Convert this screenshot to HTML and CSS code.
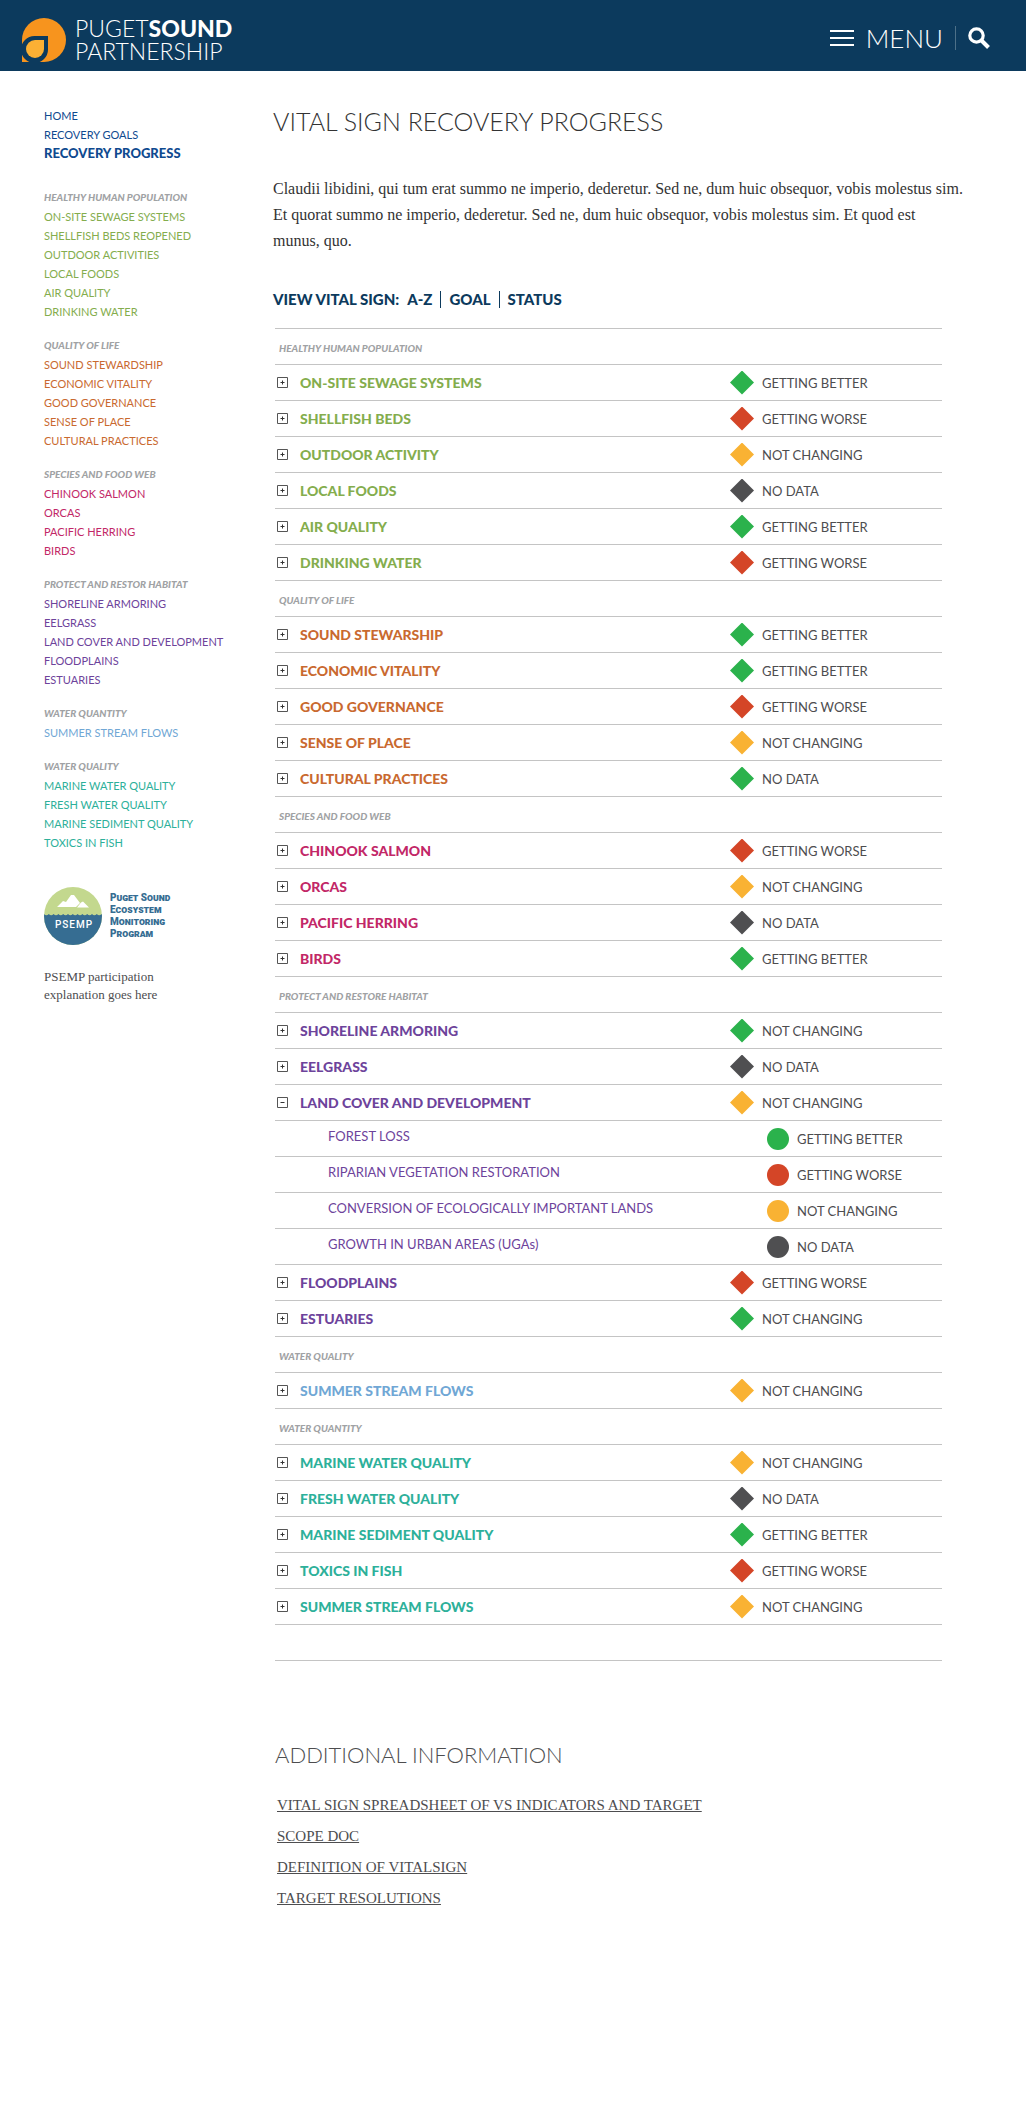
FILE: index.html
```html
<!DOCTYPE html>
<html lang="en">
<head>
<meta charset="utf-8">
<meta name="viewport" content="width=device-width, initial-scale=1">
<title>Vital Sign Recovery Progress</title>
<link rel="stylesheet" href="styles.css">
</head>
<body>
<svg class="sprite" width="0" height="0" aria-hidden="true">
  <symbol id="plus" viewBox="0 0 11 11"><path d="M.5.5h10v10H.5z" fill="#fff" stroke="#555"/><path d="M3.5 5.5h4M5.5 3.5v4" stroke="#333"/></symbol>
  <symbol id="minus" viewBox="0 0 11 11"><path d="M.5.5h10v10H.5z" fill="#fff" stroke="#555"/><path d="M3.5 5.5h4" stroke="#333"/></symbol>
</svg>

<header class="site-header">
  <a class="brand" href="#">
    <svg class="brand-mark" viewBox="0 0 44 44" aria-hidden="true">
      <path d="M0 44V22A22 22 0 1 1 22 44z" fill="#f7941e"/>
      <path d="M26 18V31.500A13.500 13.500 0 1 1 12.500 18z" fill="#0c3a5d"/>
      <path d="M22 22V31A9 9 0 1 1 13 22z" fill="#fbb034"/>
    </svg>
    <span class="brand-name"><span>PUGET<b>SOUND</b></span><span>PARTNERSHIP</span></span>
  </a>
  <div class="header-tools">
    <button class="menu-button" type="button">
      <svg width="24" height="18" viewBox="0 0 24 18" aria-hidden="true"><path d="M0 2h24M0 9h24M0 16h24" stroke="#fff" stroke-width="2"/></svg>
      MENU
    </button>
    <button class="search-button" type="button" aria-label="Search">
      <svg width="22" height="22" viewBox="0 0 22 22" fill="none" stroke="#fff" aria-hidden="true"><circle cx="8.500" cy="8.500" r="6.700" stroke-width="3.200"/><path d="M13.500 13.500l7 7" stroke-width="4"/></svg>
    </button>
  </div>
</header>

<div class="page">
  <aside class="sidebar">
    <nav>
      <ul class="nav-list nav-top">
        <li><a href="#">HOME</a></li>
        <li><a href="#">RECOVERY GOALS</a></li>
        <li><a href="#" class="current" aria-current="page">RECOVERY PROGRESS</a></li>
      </ul>
      <h2 class="label">HEALTHY HUMAN POPULATION</h2>
      <ul class="nav-list green">
        <li><a href="#">ON-SITE SEWAGE SYSTEMS</a></li>
        <li><a href="#">SHELLFISH BEDS REOPENED</a></li>
        <li><a href="#">OUTDOOR ACTIVITIES</a></li>
        <li><a href="#">LOCAL FOODS</a></li>
        <li><a href="#">AIR QUALITY</a></li>
        <li><a href="#">DRINKING WATER</a></li>
      </ul>
      <h2 class="label">QUALITY OF LIFE</h2>
      <ul class="nav-list orange">
        <li><a href="#">SOUND STEWARDSHIP</a></li>
        <li><a href="#">ECONOMIC VITALITY</a></li>
        <li><a href="#">GOOD GOVERNANCE</a></li>
        <li><a href="#">SENSE OF PLACE</a></li>
        <li><a href="#">CULTURAL PRACTICES</a></li>
      </ul>
      <h2 class="label">SPECIES AND FOOD WEB</h2>
      <ul class="nav-list pink">
        <li><a href="#">CHINOOK SALMON</a></li>
        <li><a href="#">ORCAS</a></li>
        <li><a href="#">PACIFIC HERRING</a></li>
        <li><a href="#">BIRDS</a></li>
      </ul>
      <h2 class="label">PROTECT AND RESTOR HABITAT</h2>
      <ul class="nav-list purple">
        <li><a href="#">SHORELINE ARMORING</a></li>
        <li><a href="#">EELGRASS</a></li>
        <li><a href="#">LAND COVER AND DEVELOPMENT</a></li>
        <li><a href="#">FLOODPLAINS</a></li>
        <li><a href="#">ESTUARIES</a></li>
      </ul>
      <h2 class="label">WATER QUANTITY</h2>
      <ul class="nav-list blue">
        <li><a href="#">SUMMER STREAM FLOWS</a></li>
      </ul>
      <h2 class="label">WATER QUALITY</h2>
      <ul class="nav-list teal">
        <li><a href="#">MARINE WATER QUALITY</a></li>
        <li><a href="#">FRESH WATER QUALITY</a></li>
        <li><a href="#">MARINE SEDIMENT QUALITY</a></li>
        <li><a href="#">TOXICS IN FISH</a></li>
      </ul>
    </nav>
    <div class="psemp">
      <svg class="psemp-mark" viewBox="0 0 58 58" aria-hidden="true">
        <clipPath id="disc"><circle cx="29" cy="29" r="29"/></clipPath>
        <g clip-path="url(#disc)">
          <path d="M0 0h58v58H0z" fill="#c3d88e"/>
          <path d="M0 27q2.400 2.500 4.800 0q2.400 2.500 4.800 0q2.400 2.500 4.800 0q2.400 2.500 4.800 0q2.400 2.500 4.800 0q2.400 2.500 4.800 0q2.400 2.500 4.800 0q2.400 2.500 4.800 0q2.400 2.500 4.800 0q2.400 2.500 4.800 0q2.400 2.500 4.800 0q2.400 2.500 4.800 0q2.400 2.500 4.800 0V58H0z" fill="#366d92"/>
        </g>
        <path d="M13 20l6-6 3 1 5-7 3 0 6 8-4 4zM33 20.500l4-5 2-1 6 6z" fill="#fff"/>
        <text class="psemp-word" x="30" y="40.500" text-anchor="middle">PSEMP</text>
      </svg>
      <p class="psemp-name">Puget Sound<br>Ecosystem<br>Monitoring<br>Program</p>
    </div>
    <p class="psemp-note">PSEMP participation<br>explanation goes here</p>
  </aside>

  <main class="content">
    <h1>VITAL SIGN RECOVERY PROGRESS</h1>
    <p class="intro">Claudii libidini, qui tum erat summo ne imperio, dederetur. Sed ne, dum huic obsequor, vobis molestus sim. Et quorat summo ne imperio, dederetur. Sed ne, dum huic obsequor, vobis molestus sim. Et quod est munus, quo.</p>
    <div class="view-by"><span>VIEW VITAL SIGN:</span><a href="#">A-Z</a><i></i><a href="#">GOAL</a><i></i><a href="#">STATUS</a></div>

    <table class="signs">
      <colgroup><col class="col-toggle"><col><col class="col-status"></colgroup>
      <tbody class="green">
        <tr><th class="label" colspan="3" scope="rowgroup">HEALTHY HUMAN POPULATION</th></tr>
        <tr><td><button type="button" aria-label="Expand"><svg><use href="#plus"/></svg></button></td><th scope="row">ON-SITE SEWAGE SYSTEMS</th><td><span class="status better">GETTING BETTER</span></td></tr>
        <tr><td><button type="button" aria-label="Expand"><svg><use href="#plus"/></svg></button></td><th scope="row">SHELLFISH BEDS</th><td><span class="status worse">GETTING WORSE</span></td></tr>
        <tr><td><button type="button" aria-label="Expand"><svg><use href="#plus"/></svg></button></td><th scope="row">OUTDOOR ACTIVITY</th><td><span class="status same">NOT CHANGING</span></td></tr>
        <tr><td><button type="button" aria-label="Expand"><svg><use href="#plus"/></svg></button></td><th scope="row">LOCAL FOODS</th><td><span class="status none">NO DATA</span></td></tr>
        <tr><td><button type="button" aria-label="Expand"><svg><use href="#plus"/></svg></button></td><th scope="row">AIR QUALITY</th><td><span class="status better">GETTING BETTER</span></td></tr>
        <tr><td><button type="button" aria-label="Expand"><svg><use href="#plus"/></svg></button></td><th scope="row">DRINKING WATER</th><td><span class="status worse">GETTING WORSE</span></td></tr>
      </tbody>
      <tbody class="orange">
        <tr><th class="label" colspan="3" scope="rowgroup">QUALITY OF LIFE</th></tr>
        <tr><td><button type="button" aria-label="Expand"><svg><use href="#plus"/></svg></button></td><th scope="row">SOUND STEWARSHIP</th><td><span class="status better">GETTING BETTER</span></td></tr>
        <tr><td><button type="button" aria-label="Expand"><svg><use href="#plus"/></svg></button></td><th scope="row">ECONOMIC VITALITY</th><td><span class="status better">GETTING BETTER</span></td></tr>
        <tr><td><button type="button" aria-label="Expand"><svg><use href="#plus"/></svg></button></td><th scope="row">GOOD GOVERNANCE</th><td><span class="status worse">GETTING WORSE</span></td></tr>
        <tr><td><button type="button" aria-label="Expand"><svg><use href="#plus"/></svg></button></td><th scope="row">SENSE OF PLACE</th><td><span class="status same">NOT CHANGING</span></td></tr>
        <tr><td><button type="button" aria-label="Expand"><svg><use href="#plus"/></svg></button></td><th scope="row">CULTURAL PRACTICES</th><td><span class="status better">NO DATA</span></td></tr>
      </tbody>
      <tbody class="pink">
        <tr><th class="label" colspan="3" scope="rowgroup">SPECIES AND FOOD WEB</th></tr>
        <tr><td><button type="button" aria-label="Expand"><svg><use href="#plus"/></svg></button></td><th scope="row">CHINOOK SALMON</th><td><span class="status worse">GETTING WORSE</span></td></tr>
        <tr><td><button type="button" aria-label="Expand"><svg><use href="#plus"/></svg></button></td><th scope="row">ORCAS</th><td><span class="status same">NOT CHANGING</span></td></tr>
        <tr><td><button type="button" aria-label="Expand"><svg><use href="#plus"/></svg></button></td><th scope="row">PACIFIC HERRING</th><td><span class="status none">NO DATA</span></td></tr>
        <tr><td><button type="button" aria-label="Expand"><svg><use href="#plus"/></svg></button></td><th scope="row">BIRDS</th><td><span class="status better">GETTING BETTER</span></td></tr>
      </tbody>
      <tbody class="purple">
        <tr><th class="label" colspan="3" scope="rowgroup">PROTECT AND RESTORE HABITAT</th></tr>
        <tr><td><button type="button" aria-label="Expand"><svg><use href="#plus"/></svg></button></td><th scope="row">SHORELINE ARMORING</th><td><span class="status better">NOT CHANGING</span></td></tr>
        <tr><td><button type="button" aria-label="Expand"><svg><use href="#plus"/></svg></button></td><th scope="row">EELGRASS</th><td><span class="status none">NO DATA</span></td></tr>
        <tr><td><button type="button" aria-label="Collapse" aria-expanded="true"><svg><use href="#minus"/></svg></button></td><th scope="row">LAND COVER AND DEVELOPMENT</th><td><span class="status same">NOT CHANGING</span></td></tr>
        <tr class="sub"><td></td><th scope="row">FOREST LOSS</th><td><span class="status better">GETTING BETTER</span></td></tr>
        <tr class="sub"><td></td><th scope="row">RIPARIAN VEGETATION RESTORATION</th><td><span class="status worse">GETTING WORSE</span></td></tr>
        <tr class="sub"><td></td><th scope="row">CONVERSION OF ECOLOGICALLY IMPORTANT LANDS</th><td><span class="status same">NOT CHANGING</span></td></tr>
        <tr class="sub"><td></td><th scope="row">GROWTH IN URBAN AREAS (UGAs)</th><td><span class="status none">NO DATA</span></td></tr>
        <tr><td><button type="button" aria-label="Expand"><svg><use href="#plus"/></svg></button></td><th scope="row">FLOODPLAINS</th><td><span class="status worse">GETTING WORSE</span></td></tr>
        <tr><td><button type="button" aria-label="Expand"><svg><use href="#plus"/></svg></button></td><th scope="row">ESTUARIES</th><td><span class="status better">NOT CHANGING</span></td></tr>
      </tbody>
      <tbody class="blue">
        <tr><th class="label" colspan="3" scope="rowgroup">WATER QUALITY</th></tr>
        <tr><td><button type="button" aria-label="Expand"><svg><use href="#plus"/></svg></button></td><th scope="row">SUMMER STREAM FLOWS</th><td><span class="status same">NOT CHANGING</span></td></tr>
      </tbody>
      <tbody class="teal">
        <tr><th class="label" colspan="3" scope="rowgroup">WATER QUANTITY</th></tr>
        <tr><td><button type="button" aria-label="Expand"><svg><use href="#plus"/></svg></button></td><th scope="row">MARINE WATER QUALITY</th><td><span class="status same">NOT CHANGING</span></td></tr>
        <tr><td><button type="button" aria-label="Expand"><svg><use href="#plus"/></svg></button></td><th scope="row">FRESH WATER QUALITY</th><td><span class="status none">NO DATA</span></td></tr>
        <tr><td><button type="button" aria-label="Expand"><svg><use href="#plus"/></svg></button></td><th scope="row">MARINE SEDIMENT QUALITY</th><td><span class="status better">GETTING BETTER</span></td></tr>
        <tr><td><button type="button" aria-label="Expand"><svg><use href="#plus"/></svg></button></td><th scope="row">TOXICS IN FISH</th><td><span class="status worse">GETTING WORSE</span></td></tr>
        <tr><td><button type="button" aria-label="Expand"><svg><use href="#plus"/></svg></button></td><th scope="row">SUMMER STREAM FLOWS</th><td><span class="status same">NOT CHANGING</span></td></tr>
        <tr><td colspan="3"></td></tr>
      </tbody>
    </table>

    <section class="more">
      <h2>ADDITIONAL INFORMATION</h2>
      <ul>
        <li><a href="#">VITAL SIGN SPREADSHEET OF VS INDICATORS AND TARGET</a></li>
        <li><a href="#">SCOPE DOC</a></li>
        <li><a href="#">DEFINITION OF VITALSIGN</a></li>
        <li><a href="#">TARGET RESOLUTIONS</a></li>
      </ul>
    </section>
  </main>
</div>
</body>
</html>
```
FILE: styles.css
```css
* { box-sizing: border-box; }

body {
  margin: 0;
  background: #fff;
  color: #4d4d4f;
  font-family: Lato, "Open Sans", sans-serif;
}

h1, h2, p, ul { margin: 0; padding: 0; font-weight: inherit; }
ul { list-style: none; }
a { color: inherit; text-decoration: none; }
button { padding: 0; border: 0; background: none; color: inherit; font: inherit; cursor: pointer; }
svg { display: block; }
.sprite { position: absolute; }

/* Header */
.site-header {
  display: flex;
  align-items: center;
  justify-content: space-between;
  height: 71px;
  padding: 0 36px 0 22px;
  background: #0c3a5d;
  color: #fff;
}
.brand { display: flex; gap: 9px; align-items: center; padding-top: 8px; }
.brand-mark { width: 44px; height: 44px; }
.brand-name { display: flex; flex-direction: column; font-size: 23px; font-weight: 300; line-height: 23px; }
.brand-name b { font-weight: 900; }
.header-tools { display: flex; align-items: center; padding-top: 4px; }
.menu-button { display: flex; align-items: center; gap: 12px; font-size: 26px; font-weight: 300; line-height: 32px; }
.search-button { margin-left: 12px; padding: 1px 0 1px 12px; border-left: 1px solid #4d7088; }

/* Page columns */
.page { display: grid; grid-template-columns: 229px 1fr; padding: 35px 61px 200px 44px; }

.green { color: #84ad4d; }
.orange { color: #c9692f; }
.pink { color: #c22767; }
.purple { color: #6d439b; }
.blue { color: #70a7d5; }
.teal { color: #2db09a; }

.label { color: #a0a2a4; font-size: 10px; font-weight: 900; font-style: italic; }

/* Sidebar */
.nav-list { margin-bottom: 14px; font-size: 11px; line-height: 19px; }
.nav-top { margin-bottom: 24px; color: #0f4a8f; }
.nav-top .current { font-weight: 900; font-size: 13px; }
.sidebar .label { line-height: 20px; }
.psemp { display: flex; align-items: center; gap: 8px; margin-top: 35px; }
.psemp-mark { width: 58px; height: 58px; }
.psemp-word { fill: #fff; font: 500 10px Roboto, sans-serif; letter-spacing: 1px; }
.psemp-name { color: #366d92; font: 900 10px/12px Roboto, sans-serif; font-variant: small-caps; }
.psemp-note { margin-top: 23px; font: 13px/18px "Liberation Serif", serif; }

/* Content */
h1 { color: #333; font-size: 25px; font-weight: 300; line-height: 30px; }
.intro { margin-top: 40px; color: #333; font: 16px/26px "Liberation Serif", serif; }
.view-by { display: flex; align-items: center; gap: 8px; margin-top: 35px; color: #0c3a5d; font-size: 15px; font-weight: 900; line-height: 20px; }
.view-by i { width: 1px; height: 17px; background: #0c3a5d; }

.signs { width: calc(100% - 25px); margin: 19px 23px 0 2px; border-collapse: collapse; table-layout: fixed; border-top: 1px solid #c4c4c4; }
.col-toggle { width: 25px; }
.col-status { width: 212px; }
.signs tr { height: 36px; border-bottom: 1px solid #c4c4c4; }
.signs th, .signs td { padding: 0; text-align: left; vertical-align: middle; }
.signs th { font-size: 14px; font-weight: 900; line-height: 20px; }
.signs th.label { padding: 2px 0 0 4px; font-size: 10px; }
.signs button { display: block; margin-left: 2px; }
.signs button svg { width: 11px; height: 11px; }

.status { display: flex; align-items: center; gap: 8px; color: #4d4d4f; font-size: 13px; line-height: 20px; }
.status::before { content: ""; width: 24px; height: 24px; background: currentColor; clip-path: polygon(50% 0, 100% 50%, 50% 100%, 0 50%); }
.better::before { background: #2bb24c; }
.worse::before { background: #d44527; }
.same::before { background: #f9b233; }
.none::before { background: #4f4f51; }

.signs .sub th { padding: 0 0 6px 28px; font-size: 13px; font-weight: 400; }
.sub .status { padding-left: 37px; }
.sub .status::before { width: 22px; height: 22px; border-radius: 50%; clip-path: none; }

.more { padding: 78px 0 0 2px; }
.more h2 { font-size: 22px; font-weight: 300; line-height: 32px; }
.more ul { padding: 19px 0 0 2px; }
.more li { font: 15px/31px "Liberation Serif", serif; }
.more a { text-decoration: underline; }
```
